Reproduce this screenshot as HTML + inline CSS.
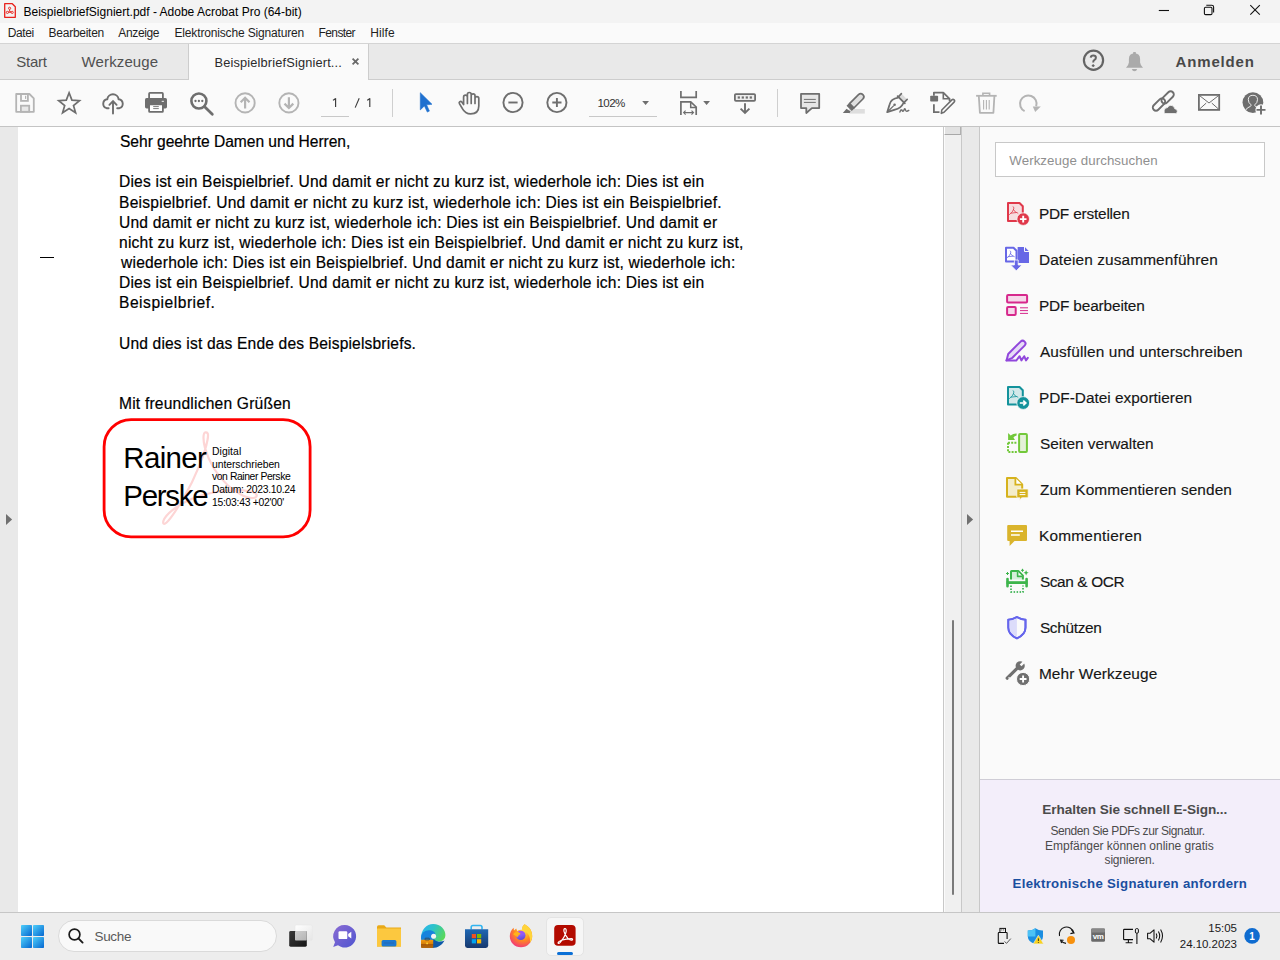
<!DOCTYPE html>
<html><head><meta charset="utf-8"><title>Acrobat</title>
<style>
*{box-sizing:border-box;margin:0;padding:0}
html,body{width:1280px;height:960px;overflow:hidden;background:#fff;font-family:"Liberation Sans",sans-serif;color:#000}
.a{position:absolute}
.t{position:absolute;white-space:pre}
svg{position:absolute;overflow:visible}
</style></head><body>

<div class="a" style="left:0;top:0;width:1280px;height:23px;background:#f3f3f3"></div>
<div class="a" style="left:0;top:23px;width:1280px;height:20px;background:#fafafa"></div>
<div class="a" style="left:0;top:43px;width:1280px;height:1px;background:#d4d4d4"></div>
<div class="a" style="left:0;top:44px;width:1280px;height:35px;background:#e9e9e9"></div>
<div class="a" style="left:0;top:79px;width:1280px;height:1px;background:#cdcdcd"></div>
<div class="a" style="left:188px;top:44px;width:1px;height:36px;background:#cdcdcd"></div>
<div class="a" style="left:189px;top:44px;width:179px;height:36px;background:#fafafa"></div>
<div class="a" style="left:368px;top:44px;width:1px;height:36px;background:#cdcdcd"></div>
<div class="a" style="left:0;top:80px;width:1280px;height:46px;background:#fafafa"></div>
<div class="a" style="left:0;top:126px;width:1280px;height:1px;background:#c4c4c4"></div>
<div class="a" style="left:0;top:127px;width:18px;height:785px;background:#e9e9e9"></div>
<div class="a" style="left:18px;top:127px;width:925px;height:785px;background:#ffffff"></div>
<div class="a" style="left:943px;top:127px;width:1px;height:785px;background:#c8c8c8"></div>
<div class="a" style="left:944px;top:127px;width:1px;height:785px;background:#fbfbfb"></div>
<div class="a" style="left:945px;top:127px;width:16px;height:785px;background:#f0f0f0"></div>
<div class="a" style="left:961px;top:127px;width:1px;height:785px;background:#c8c8c8"></div>
<div class="a" style="left:962px;top:127px;width:17px;height:785px;background:#e9e9e9"></div>
<div class="a" style="left:979px;top:127px;width:1px;height:785px;background:#c8c8c8"></div>
<div class="a" style="left:980px;top:127px;width:300px;height:652px;background:#fafafa"></div>
<div class="a" style="left:980px;top:779px;width:300px;height:1px;background:#cfcdd6"></div>
<div class="a" style="left:980px;top:780px;width:300px;height:132px;background:#f3eefa"></div>
<div class="a" style="left:0;top:912px;width:1280px;height:1px;background:#c6c6c6"></div>
<div class="a" style="left:0;top:913px;width:1280px;height:47px;background:#ededed"></div>
<!-- scrollbar thumb top & line -->
<div class="a" style="left:944px;top:127px;width:17px;height:8px;background:#e2e2e2;border-bottom:1px solid #a8a8a8;border-right:1px solid #b0b0b0;border-left:1px solid #fff"></div>
<div class="a" style="left:952px;top:620px;width:2px;height:275px;background:#7a7a7a;border-radius:1px"></div>
<!-- left dash -->
<div class="a" style="left:40px;top:257px;width:14px;height:1px;background:#000"></div>
<!-- search box -->
<div class="a" style="left:995px;top:142px;width:270px;height:35px;background:#fff;border:1px solid #c8c8c8"></div>
<!-- toolbar underlines & separators -->
<div class="a" style="left:321px;top:116px;width:28px;height:1px;background:#c8c8c8"></div>
<div class="a" style="left:589px;top:116px;width:68px;height:1px;background:#c8c8c8"></div>
<div class="a" style="left:392px;top:89px;width:1px;height:28px;background:#cfcfcf"></div>
<div class="a" style="left:777px;top:89px;width:1px;height:28px;background:#cfcfcf"></div>
<!-- taskbar search pill -->
<div class="a" style="left:58px;top:920px;width:219px;height:32px;background:#f9f9f9;border:1px solid #dadada;border-radius:16px"></div>
<!-- acrobat active -->
<div class="a" style="left:546px;top:917px;width:38px;height:39px;background:#f6f6f6;border:1px solid #e4e4e4;border-radius:5px"></div>
<div class="a" style="left:557px;top:952px;width:16px;height:3px;background:#0a6fd6;border-radius:2px"></div>


<svg style="left:0;top:0" width="1280" height="960" viewBox="0 0 1280 960">
 <!-- title bar pdf icon -->
 <path d="M4.7,3.7 H12.3 L15.3,6.7 V17.3 H4.7 Z" fill="none" stroke="#e8211c" stroke-width="1.3" stroke-linejoin="round"/>
 <g fill="none" stroke="#e8211c" stroke-width="0.9">
  <circle cx="9.6" cy="8.3" r="1.1"/><circle cx="7.4" cy="12.4" r="1.1"/><circle cx="12.2" cy="12.4" r="1.1"/>
  <path d="M9.6,9.4 V11.2 M8.5,12.3 H11.1 M9.6,11.2 L8.3,12 M9.6,11.2 L11.2,12"/>
 </g>
 <!-- window controls -->
 <path d="M1158.8,10.5 H1169" stroke="#111" stroke-width="1.1"/>
 <rect x="1204.4" y="7.2" width="7.6" height="7.4" rx="1.2" fill="none" stroke="#111" stroke-width="1.1"/>
 <path d="M1206.3,5.3 H1211.8 Q1213.6,5.3 1213.6,7.1 V12.6" fill="none" stroke="#111" stroke-width="1.1"/>
 <path d="M1250.3,5.2 L1259.8,14.7 M1259.8,5.2 L1250.3,14.7" stroke="#111" stroke-width="1.1"/>

 <!-- tab close x -->
 <path d="M352.6,58.6 L358.4,64.4 M358.4,58.6 L352.6,64.4" stroke="#6a6a6a" stroke-width="1.8"/>
 <!-- help -->
 <circle cx="1093.5" cy="60.3" r="9.6" fill="none" stroke="#646464" stroke-width="2.2"/>
 <path d="M1090.7,57.6 Q1090.9,55.6 1093.3,55.6 Q1095.9,55.6 1095.9,57.7 Q1095.9,59.1 1094.5,59.9 Q1093.2,60.6 1093.2,62.4" fill="none" stroke="#646464" stroke-width="2"/>
 <path d="M1093.2,64.2 V67 M1091.8,65.6 H1094.6" stroke="#646464" stroke-width="1.3"/>
 <!-- bell -->
 <rect x="1133.1" y="51.9" width="2.8" height="2.6" rx="0.6" fill="#aaaaaa"/>
 <path d="M1134.5,53.6 Q1140.1,53.6 1140.1,59 V62.6 Q1140.2,64.8 1143,67.7 H1126 Q1128.8,64.8 1128.9,62.6 V59 Q1128.9,53.6 1134.5,53.6 Z" fill="#aaaaaa"/>
 <path d="M1131.8,69 H1137.2 Q1136.6,71.2 1134.5,71.2 Q1132.4,71.2 1131.8,69 Z" fill="#aaaaaa"/>
 <!-- page numbers -->
 <path d="M335.6,98.2 V106.9 M335.6,98.3 Q334.6,99.8 332.9,100.3" fill="none" stroke="#3a3a3a" stroke-width="1.15"/>
 <path d="M359.2,98.2 L355.2,107.6" fill="none" stroke="#3a3a3a" stroke-width="1.1"/>
 <path d="M369.8,98.2 V106.9 M369.8,98.3 Q368.8,99.8 367.1,100.3" fill="none" stroke="#3a3a3a" stroke-width="1.15"/>
 <!-- save -->
 <path d="M16.2,94 H29.4 L33.8,98.4 V111.8 H16.2 Z" fill="none" stroke="#b4b4b4" stroke-width="1.8" stroke-linejoin="round"/>
 <rect x="21" y="94" width="6.9" height="6.9" fill="none" stroke="#b4b4b4" stroke-width="1.8"/>
 <rect x="25" y="95.8" width="1.2" height="3.1" fill="#b4b4b4"/>
 <rect x="20.9" y="105.7" width="8.3" height="6.1" fill="#e8e8e8" stroke="#b4b4b4" stroke-width="1.8"/>
 <!-- star -->
 <path d="M69.1,92.8 L71.9,100.1 L79.5,100.6 L73.5,105.6 L75.6,112.8 L69.1,108.6 L62.6,112.8 L64.7,105.6 L58.7,100.6 L66.3,100.1 Z" fill="none" stroke="#6e6e6e" stroke-width="1.7" stroke-linejoin="miter"/>
 <!-- upload cloud -->
 <path d="M108.6,108.2 H106.6 A4.6,4.6 0 0 1 107.3,99.2 A5.7,5.7 0 0 1 118.6,99.2 A4.6,4.6 0 0 1 119.4,108.2 H117.2" fill="none" stroke="#6e6e6e" stroke-width="1.9" stroke-linecap="round"/>
 <path d="M113,113.6 V101.2 M109.4,104.8 L113,101.2 L116.6,104.8" fill="none" stroke="#6e6e6e" stroke-width="1.9" stroke-linecap="round"/>
 <!-- printer -->
 <rect x="149.1" y="92.9" width="13.8" height="6.5" rx="0.8" fill="none" stroke="#6e6e6e" stroke-width="1.8"/>
 <rect x="145" y="98" width="22" height="10.4" rx="1.6" fill="#6e6e6e"/>
 <rect x="149.1" y="104.4" width="13.8" height="7.4" rx="0.6" fill="#fff" stroke="#6e6e6e" stroke-width="1.8"/>
 <path d="M153.2,106.6 H158.8 M153.2,108.6 H158.8" stroke="#6e6e6e" stroke-width="0.9"/>
 <rect x="161.7" y="100.8" width="2.2" height="1.2" fill="#ddd"/>
 <!-- zoom search -->
 <circle cx="198.9" cy="101" r="7.5" fill="none" stroke="#6e6e6e" stroke-width="2.6"/>
 <path d="M204.4,106.6 L212.3,114.3" stroke="#6e6e6e" stroke-width="2.8" stroke-linecap="round"/>
 <circle cx="195.5" cy="101" r="1.15" fill="#6e6e6e"/><circle cx="198.9" cy="101" r="1.15" fill="#6e6e6e"/><circle cx="202.3" cy="101" r="1.15" fill="#6e6e6e"/>
 <!-- up / down -->
 <circle cx="245.1" cy="102.9" r="9.6" fill="none" stroke="#b4b4b4" stroke-width="1.9"/>
 <path d="M245.1,108.6 V97.8 M240.7,102.2 L245.1,97.8 L249.5,102.2" fill="none" stroke="#b4b4b4" stroke-width="2.2"/>
 <circle cx="288.9" cy="102.9" r="9.6" fill="none" stroke="#b4b4b4" stroke-width="1.9"/>
 <path d="M288.9,97.2 V108 M284.5,103.6 L288.9,108 L293.3,103.6" fill="none" stroke="#b4b4b4" stroke-width="2.2"/>
 <!-- pointer -->
 <path d="M420.3,92.7 L432,104.3 L426.6,104.8 L429.4,111.1 L427.3,112.1 L424.4,105.9 L420.3,109.9 Z" fill="#1f70cf" stroke="#1f70cf" stroke-width="0.6" stroke-linejoin="round"/>
 <!-- hand -->
 <path d="M463.6,104.5 V97 A1.9,1.9 0 0 1 467.4,97 V103.5 V94.4 A1.9,1.9 0 0 1 471.2,94.4 V103.5 V95.8 A1.9,1.9 0 0 1 475,95.8 V103.5 V98.6 A1.9,1.9 0 0 1 478.8,98.6 V106 C478.8,111.2 475.5,113.9 470.6,113.9 C466.5,113.9 464,111.5 462.2,108.3 L459.4,103.6 C458.6,102.2 460.6,100.6 461.8,102 Z" fill="none" stroke="#6e6e6e" stroke-width="1.7" stroke-linejoin="round"/>
 <!-- zoom out / in -->
 <circle cx="513" cy="102.5" r="9.6" fill="none" stroke="#6e6e6e" stroke-width="1.9"/>
 <path d="M508.4,102.5 H517.6" stroke="#6e6e6e" stroke-width="1.9"/>
 <circle cx="556.9" cy="102.5" r="9.6" fill="none" stroke="#6e6e6e" stroke-width="1.9"/>
 <path d="M552.3,102.5 H561.5 M556.9,97.9 V107.1" stroke="#6e6e6e" stroke-width="1.9"/>
 <!-- dropdown triangles -->
 <path d="M642.2,101 H649 L645.6,104.9 Z" fill="#6e6e6e"/>
 <path d="M703.2,101 H710 L706.6,104.9 Z" fill="#6e6e6e"/>
 <!-- page fit -->
 <path d="M680.9,91.1 V97.3 H696.2 V91.1" fill="none" stroke="#6e6e6e" stroke-width="1.7"/>
 <path d="M680.9,114.9 V101.9 H690.7 L696.2,107 V114.9" fill="none" stroke="#6e6e6e" stroke-width="1.7"/>
 <path d="M690.7,101.9 V107.4 H696.2" fill="none" stroke="#6e6e6e" stroke-width="1.5"/>
 <path d="M683.6,112.6 H693.5 M685.6,110.6 L683.6,112.6 L685.6,114.6 M691.5,110.6 L693.5,112.6 L691.5,114.6" fill="none" stroke="#6e6e6e" stroke-width="1.1"/>
 <!-- ruler + down -->
 <rect x="734.9" y="94.1" width="20.2" height="6.7" rx="1" fill="#ececec" stroke="#6e6e6e" stroke-width="1.8"/>
 <rect x="737.7" y="96.4" width="2.2" height="2.2" fill="#6e6e6e"/><rect x="741.7" y="96.4" width="2.2" height="2.2" fill="#6e6e6e"/>
 <rect x="745.7" y="96.4" width="2.2" height="2.2" fill="#6e6e6e"/><rect x="749.7" y="96.4" width="2.2" height="2.2" fill="#6e6e6e"/>
 <path d="M745,103.2 V112.8 M740.6,108.6 L745,113 L749.4,108.6" fill="none" stroke="#6e6e6e" stroke-width="1.9"/>
 <!-- comment -->
 <path d="M801,93.9 H819.2 V108.1 H811.9 L806.3,113 V108.1 H801 Z" fill="#e6e6e6" stroke="#6e6e6e" stroke-width="1.8" stroke-linejoin="round"/>
 <path d="M803.9,99.4 H815.8 M803.9,102.4 H815.8" stroke="#6e6e6e" stroke-width="1"/>
 <!-- highlighter -->
 <rect x="848.9" y="109" width="15.9" height="4.6" fill="#dedede"/>
 <path d="M-6.5,-3.1 H6.2 A3.1,3.1 0 0 1 6.2,3.1 H-6.5 Z" transform="translate(856.3 101.2) rotate(-45)" fill="#e0e0e0" stroke="#6e6e6e" stroke-width="1.7" stroke-linejoin="round"/>
 <path d="M-6.5,-3.1 V3.1 H-9.5 V-3.1 Z" transform="translate(856.3 101.2) rotate(-45)" fill="#6e6e6e" stroke="#6e6e6e" stroke-width="1.2"/>
 <path d="M846.5,108.8 L842.8,112.9 L849.6,112.9 L850.6,111.6 Z" fill="#6e6e6e"/>
 <!-- pen sign -->
 <path d="M898.6,96.6 L901.4,93.6 L907.2,99.4 L904.2,102.4 Z" fill="#dcdcdc"/>
 <path d="M898.6,96.6 L901.4,93.6 M904.2,102.4 L907.2,99.4" stroke="#6e6e6e" stroke-width="1.6" stroke-linecap="round"/>
 <path d="M897.6,96.1 L904.8,103.3" stroke="#6e6e6e" stroke-width="1.8" stroke-linecap="round"/>
 <path d="M898.4,97.6 Q890.8,98.6 889.6,104.4 L887.2,112.2 L895,109.6 Q900.8,108.4 903.6,102.8" fill="none" stroke="#6e6e6e" stroke-width="1.8" stroke-linejoin="round"/>
 <path d="M887.6,111.8 L893.8,105.6" stroke="#6e6e6e" stroke-width="1.3"/>
 <circle cx="894.6" cy="104.8" r="1.3" fill="#6e6e6e"/>
 <path d="M899.9,112 Q901.2,108.6 902.2,110.6 Q903,112.4 904.2,109.4 Q905.1,107.8 905.6,110.4 Q906.2,112.2 908.8,110.4" fill="none" stroke="#6e6e6e" stroke-width="1.4" stroke-linecap="round"/>
 <!-- edit doc -->
 <path d="M933.9,95.8 V92.6 H943.3 L949.6,98.8 V101.2" fill="none" stroke="#6e6e6e" stroke-width="1.8" stroke-linejoin="round"/>
 <path d="M943.3,92.6 V98.8 H949.6" fill="none" stroke="#6e6e6e" stroke-width="1.6"/>
 <path d="M933.9,104.3 V112.2 H939.5" fill="none" stroke="#6e6e6e" stroke-width="1.8"/>
 <rect x="930.2" y="95.8" width="7.9" height="5.7" rx="0.8" fill="#6e6e6e"/>
 <path d="M941.3,113.3 L941.8,110 L951.9,99.9 Q953,98.8 954.1,99.9 Q955.2,101 954.1,102.1 L944,112.2 Z" fill="#fff" stroke="#6e6e6e" stroke-width="1.6" stroke-linejoin="round"/>
 <!-- trash -->
 <path d="M976.1,95.8 H996.7" stroke="#b4b4b4" stroke-width="1.8"/>
 <path d="M982.9,95.4 V93.3 H989.6 V95.4" fill="none" stroke="#b4b4b4" stroke-width="1.6"/>
 <path d="M978.8,96 L979.9,112.8 H993.4 L994.4,96" fill="none" stroke="#b4b4b4" stroke-width="1.8" stroke-linejoin="round"/>
 <path d="M983.6,100 V109.4 M986.4,100 V109.4 M989.2,100 V109.4" stroke="#b4b4b4" stroke-width="1.1"/>
 <!-- redo -->
 <path d="M1024.6,111.2 A8.3,8.3 0 1 1 1036.2,106.3" fill="none" stroke="#b4b4b4" stroke-width="2"/>
 <path d="M1032.8,106.4 L1040.8,106.6 L1035.2,111.9 Z" fill="#b4b4b4"/>
 <!-- link cloud -->
 <g fill="none" stroke="#6e6e6e" stroke-width="1.9">
  <rect x="-7.4" y="-3.2" width="14.8" height="6.4" rx="3.2" transform="translate(1159.6 105.2) rotate(-45) translate(0 -0.9)"/>
  <rect x="-7.4" y="-3.2" width="14.8" height="6.4" rx="3.2" transform="translate(1167.0 96.8) rotate(-45) translate(0 0.9)"/>
 </g>
 <path d="M1164.6,113.6 H1175.6 Q1177.3,113.6 1177.3,111.4 Q1177.3,108.8 1174.8,108.8 Q1174.2,105.3 1170.9,105.3 Q1168.3,105.3 1167.6,107.5 Q1164.3,107.6 1164.1,110.8 Q1164.1,113.6 1164.6,113.6 Z" fill="#6e6e6e" stroke="#fafafa" stroke-width="0.8"/>
 <!-- mail -->
 <rect x="1198.9" y="94.9" width="20.3" height="15" fill="none" stroke="#6e6e6e" stroke-width="1.8"/>
 <path d="M1199.3,95.4 L1209,103 L1218.8,95.4 M1199.3,109.3 L1206.2,103.1 M1218.8,109.3 L1211.8,103.1" fill="none" stroke="#6e6e6e" stroke-width="1"/>
 <!-- user add -->
 <circle cx="1252.9" cy="102.6" r="10.4" fill="#6e6e6e"/>
 <path d="M1245.6,110.2 Q1246.8,107.6 1250.4,106.4 Q1251.2,106 1251,104.8 Q1248.3,102.8 1248.3,99.6 Q1248.4,95.3 1252.9,95.3 Q1257.4,95.3 1257.5,99.6 Q1257.5,102.8 1254.8,104.8 Q1254.6,106 1255.4,106.4 Q1257.2,107 1258.4,107.8" fill="none" stroke="#fafafa" stroke-width="0.9"/>
 <circle cx="1261" cy="109.9" r="5.6" fill="#fafafa"/>
 <path d="M1261,105.4 V114.4 M1256.5,109.9 H1265.5" stroke="#6e6e6e" stroke-width="1.9"/>
 <!-- left/right arrows -->
 <path d="M6,514 L12.1,519.5 L6,525 Z" fill="#707070"/>
 <path d="M967,514 L973.1,519.5 L967,525 Z" fill="#707070"/>
</svg>

<svg style="left:0;top:0" width="1280" height="960" viewBox="0 0 1280 960">
 <!-- PDF erstellen -->
 <path d="M1008,203 H1019.5 L1022.8,206.3 V221 H1008 Z" fill="#f6dde0" stroke="#e0384a" stroke-width="2" stroke-linejoin="round"/>
 <path d="M1013.125,206.6 Q1014.1875,206.6 1013.7624999999999,208.9375 Q1013.01875,211.9125 1009.5124999999999,214.56875 M1013.4437499999999,209.575 Q1014.6125,212.44375 1017.8,213.1875 M1010.89375,213.1875 L1016.20625,212.54999999999998" fill="none" stroke="#e0384a" stroke-width="0.8" stroke-linecap="round"/>
 <circle cx="1023.2" cy="219.1" r="6.3" fill="#e0384a" stroke="#fafafa" stroke-width="0.8"/>
 <path d="M1023.2,215.8 V222.4 M1019.9,219.1 H1026.5" stroke="#fff" stroke-width="1.9"/>
 <!-- Dateien zusammenfuehren -->
 <path d="M1006,247.8 H1013.5 L1016.5,250.8 V261.5 H1006 Z" fill="#fff" stroke="#6767e6" stroke-width="2" stroke-linejoin="round"/>
 <path d="M1010.175,250.9 Q1011.1125,250.9 1010.7375,252.9625 Q1010.08125,255.5875 1006.9875,257.93125 M1010.45625,253.525 Q1011.4875,256.05625 1014.3,256.7125 M1008.20625,256.7125 L1012.89375,256.15" fill="none" stroke="#6767e6" stroke-width="0.8" stroke-linecap="round"/>
 <path d="M1017.6,247 H1024.8 L1029,251.2 V263 H1017.6 Z" fill="#6767e6"/>
 <path d="M1024.5,247 V251.5 H1029" fill="none" stroke="#fafafa" stroke-width="1"/>
 <path d="M1014.4,260 H1018.2 V265 H1022 L1016.3,270.8 L1010.6,265 H1014.4 Z" fill="#6767e6" stroke="#fafafa" stroke-width="0.8"/>
 <!-- PDF bearbeiten -->
 <rect x="1007.1" y="295" width="20" height="7.6" rx="1" fill="#f6d8ea" stroke="#d6288c" stroke-width="2"/>
 <rect x="1007.1" y="307" width="8.6" height="8" rx="1" fill="#f6d8ea" stroke="#d6288c" stroke-width="2"/>
 <path d="M1020,307.8 H1028 M1020,310.6 H1028 M1020,313.4 H1028" stroke="#d6288c" stroke-width="1"/>
 <!-- Ausfuellen -->
 <path d="M1006.6,360.3 L1008.2,354 L1020.6,341.6 Q1022.6,339.6 1024.6,341.6 Q1026.6,343.6 1024.6,345.6 L1012.4,357.8 Z" fill="#e6dcf6" stroke="#9147dc" stroke-width="2" stroke-linejoin="round"/>
 <path d="M1006.4,360.6 H1016.2 L1019.6,356.2 L1021.4,360.4 L1024.2,356.2 L1026,360.4 L1027.8,357.9" fill="none" stroke="#9147dc" stroke-width="2" stroke-linejoin="round" stroke-linecap="round"/>
 <!-- PDF-Datei exportieren -->
 <path d="M1008,387 H1019.5 L1022.8,390.3 V404.6 H1008 Z" fill="#d3e8ea" stroke="#12929b" stroke-width="2" stroke-linejoin="round"/>
 <path d="M1013.125,390.59999999999997 Q1014.1875,390.59999999999997 1013.7624999999999,392.93749999999994 Q1013.01875,395.91249999999997 1009.5124999999999,398.56874999999997 M1013.4437499999999,393.575 Q1014.6125,396.44374999999997 1017.8,397.18749999999994 M1010.89375,397.18749999999994 L1016.20625,396.54999999999995" fill="none" stroke="#12929b" stroke-width="0.8" stroke-linecap="round"/>
 <circle cx="1023.2" cy="403" r="6.4" fill="#12929b" stroke="#fafafa" stroke-width="0.8"/>
 <path d="M1019.8,403 H1025.5 M1023.3,400.6 L1025.8,403 L1023.3,405.4" fill="none" stroke="#fff" stroke-width="1.7"/>
 <!-- Seiten verwalten -->
 <rect x="1019.1" y="434" width="7.8" height="18" rx="1" fill="#e4f1d8" stroke="#72c83a" stroke-width="2"/>
 <path d="M1008,442.8 V452 H1016.8 M1008,442.8 H1016.8" fill="none" stroke="#72c83a" stroke-width="2" stroke-dasharray="2 1.2"/>
 <path d="M1008.1,433 L1010.6,435.6 Q1013.4,433.4 1016.6,433.6 L1016.6,435.4 Q1014.6,436 1013.4,437.4 L1015,439.9 H1008.1 Z" fill="#72c83a"/>
 <!-- Zum Kommentieren senden -->
 <path d="M1007,478 H1015.8 L1022.2,484.4 V496.8 H1007 Z" fill="#f4edca" stroke="#d6b21c" stroke-width="2" stroke-linejoin="round"/>
 <path d="M1015.4,478 V484.6 H1022" fill="#fff" stroke="#d6b21c" stroke-width="1.8"/>
 <path d="M1017.6,489 H1027.4 Q1028.2,489 1028.2,489.8 V497 Q1028.2,497.8 1027.4,497.8 H1021.6 L1019.8,500.6 V497.8 H1017.6 Q1016.8,497.8 1016.8,497 V489.8 Q1016.8,489 1017.6,489 Z" fill="#d6b21c" stroke="#fafafa" stroke-width="0.8"/>
 <path d="M1019.6,492.4 H1025.4 M1019.6,494.6 H1025.4" stroke="#fff" stroke-width="1"/>
 <!-- Kommentieren -->
 <path d="M1008.2,525 H1026 Q1027,525 1027,526 V540 Q1027,541 1026,541 H1014.5 L1009.6,546 V541 H1008.2 Q1007.2,541 1007.2,540 V526 Q1007.2,525 1008.2,525 Z" fill="#dab42c"/>
 <path d="M1011,531.3 H1023 M1011,535 H1019.8" stroke="#fff" stroke-width="1.6"/>
 <!-- Scan & OCR -->
 <path d="M1011,579.6 V571.6 Q1011,571 1011.6,571 H1018.3 L1022.9,575.6 V579.6" fill="#d6efd9" stroke="#3db54b" stroke-width="2" stroke-linejoin="round"/>
 <path d="M1017.6,571.4 V576.4 H1022.6" fill="#fafafa" stroke="#3db54b" stroke-width="1.6" stroke-linejoin="round"/>
 <path d="M1007.5,579 V586.3 M1026.6,579 V586.3" stroke="#3db54b" stroke-width="2.6" stroke-linecap="round"/>
 <path d="M1006.6,582.6 H1027.4" stroke="#3db54b" stroke-width="2.8"/>
 <path d="M1011,585.6 V592 H1023 V585.6" fill="none" stroke="#1fa83a" stroke-width="1.5" stroke-dasharray="1.5 1.5"/>
 <path d="M1007.5,572 V575 M1006,573.5 H1009" stroke="#3db54b" stroke-width="1"/>
 <path d="M1022.5,568.8 V571.8 M1021,570.3 H1024" stroke="#3db54b" stroke-width="1"/>
 <path d="M1026.1,570.2 L1026.9,572 L1028.7,572.8 L1026.9,573.6 L1026.1,575.4 L1025.3,573.6 L1023.5,572.8 L1025.3,572 Z" fill="#3db54b"/>
 <!-- Schuetzen -->
 <path d="M1016.9,617 Q1021.5,619.8 1025.5,619.6 V627.5 Q1025.5,634.6 1016.9,638.3 Q1008.3,634.6 1008.3,627.5 V619.6 Q1012.3,619.8 1016.9,617 Z" fill="#fafafa" stroke="#6565ec" stroke-width="1.9" stroke-linejoin="round"/>
 <path d="M1016.9,618.3 Q1012.6,620.7 1009.3,620.6 V627.5 Q1009.3,633.7 1016.9,637.1 Z" fill="#dcdcfa"/>
 <path d="M1016.9,617 Q1021.5,619.8 1025.5,619.6 V627.5 Q1025.5,634.6 1016.9,638.3 Q1008.3,634.6 1008.3,627.5 V619.6 Q1012.3,619.8 1016.9,617 Z" fill="none" stroke="#6565ec" stroke-width="1.9" stroke-linejoin="round"/>
 <!-- Mehr Werkzeuge -->
 <path d="M1007.2,678.2 L1016.6,668.8" stroke="#707070" stroke-width="3.2" stroke-linecap="round"/>
 <circle cx="1020.2" cy="665.8" r="4.6" fill="#707070"/>
 <path d="M1020.6,665.4 L1025.6,660.4" stroke="#fafafa" stroke-width="2.6"/>
 <circle cx="1009.1" cy="677.9" r="0.8" fill="#fafafa"/>
 <circle cx="1023.1" cy="679" r="6.6" fill="#707070" stroke="#fafafa" stroke-width="1"/>
 <path d="M1023.1,675.6 V682.4 M1019.7,679 H1026.5" stroke="#fff" stroke-width="1.9"/>
</svg>

<svg style="left:0;top:0" width="1280" height="960" viewBox="0 0 1280 960">
 <defs>
  <linearGradient id="win" x1="0" y1="0" x2="1" y2="1"><stop offset="0" stop-color="#4fd0fb"/><stop offset="1" stop-color="#0566d0"/></linearGradient>
  <linearGradient id="teams" x1="0" y1="0" x2="1" y2="1"><stop offset="0" stop-color="#8a6bd3"/><stop offset="1" stop-color="#4f55d0"/></linearGradient>
  <linearGradient id="edge1" x1="0" y1="0.2" x2="1" y2="0.6"><stop offset="0" stop-color="#2bb4f0"/><stop offset="0.45" stop-color="#2dc3c8"/><stop offset="1" stop-color="#58d85a"/></linearGradient>
  <linearGradient id="brief" x1="0" y1="0" x2="0" y2="1"><stop offset="0" stop-color="#f59a10"/><stop offset="0.45" stop-color="#d8830c"/><stop offset="0.55" stop-color="#a85a08"/><stop offset="1" stop-color="#b46a10"/></linearGradient>
  <linearGradient id="store" x1="0" y1="0" x2="0" y2="1"><stop offset="0" stop-color="#1f68b4"/><stop offset="1" stop-color="#17396f"/></linearGradient>
  <linearGradient id="tvl" x1="0" y1="0" x2="1" y2="1"><stop offset="0" stop-color="#ffffff"/><stop offset="1" stop-color="#e6e6e6"/></linearGradient>
  <linearGradient id="tvd" x1="0" y1="0" x2="1" y2="1"><stop offset="0" stop-color="#3a3a3a"/><stop offset="1" stop-color="#151515"/></linearGradient>
  <linearGradient id="tvm" x1="0" y1="0" x2="1" y2="1"><stop offset="0" stop-color="#cfcfcf"/><stop offset="1" stop-color="#b4b4b4"/></linearGradient>
  <linearGradient id="ffp" x1="0.3" y1="0" x2="0.6" y2="1"><stop offset="0" stop-color="#b44cf0"/><stop offset="0.5" stop-color="#8a5cf5"/><stop offset="1" stop-color="#5a48d0"/></linearGradient>
  <radialGradient id="ff" cx="0.6" cy="0.3" r="0.8"><stop offset="0" stop-color="#ffe14a"/><stop offset="0.5" stop-color="#ff8a1e"/><stop offset="1" stop-color="#f0288a"/></radialGradient>
 </defs>
 <!-- windows logo -->
 <rect x="21" y="925" width="11" height="11" rx="0.8" fill="url(#win)"/>
 <rect x="33" y="925" width="11" height="11" rx="0.8" fill="url(#win)"/>
 <rect x="21" y="937" width="11" height="11" rx="0.8" fill="url(#win)"/>
 <rect x="33" y="937" width="11" height="11" rx="0.8" fill="url(#win)"/>
 <!-- search magnifier -->
 <circle cx="74.5" cy="934.5" r="5.4" fill="none" stroke="#1b1b1b" stroke-width="1.7"/>
 <path d="M78.4,938.4 L82.6,942.6" stroke="#1b1b1b" stroke-width="1.9" stroke-linecap="round"/>
 <!-- task view -->
 <rect x="295" y="925" width="17.3" height="15.3" rx="1.2" fill="url(#tvl)" stroke="#e4e4e4" stroke-width="0.5"/>
 <rect x="289.2" y="931" width="17.6" height="15.7" rx="1.4" fill="url(#tvd)"/>
 <rect x="295" y="931" width="11.8" height="9.6" rx="0.8" fill="url(#tvm)"/>
 <!-- teams -->
 <path d="M344.6,925 A11.3,11.3 0 1 1 338,945.3 L333.2,947 L335,942.3 A11.3,11.3 0 0 1 344.6,925 Z" fill="url(#teams)"/>
 <rect x="338.5" y="931.2" width="8.8" height="7.9" rx="1.2" fill="#fff"/>
 <path d="M348.2,934 L351.3,931.8 V938.4 L348.2,936.3 Z" fill="#fff"/>
 <!-- folder -->
 <path d="M377,927 Q377,925.3 378.6,925.3 H384.2 L386.4,927.4 H401 V946.5 H377 Z" fill="#e9a917"/>
 <rect x="377" y="928.6" width="24" height="17.9" rx="0.6" fill="#fcc83f"/>
 <rect x="381.6" y="940" width="14.8" height="6.5" rx="1.5" fill="#1b78d0"/>
 <path d="M384,943 H394" stroke="#2a63a8" stroke-width="0.8"/>
 <!-- edge -->
 <path d="M433.2,923.9 C440.8,923.9 445.4,929.6 445.4,935 C445.4,938.8 442.6,941.6 438.6,941.6 C434.6,941.6 432.2,939.4 433.4,938.2 C433.2,938.2 421,942 421,938 C421,930 426.4,923.9 433.2,923.9 Z" fill="url(#edge1)"/>
 <path d="M421,938 C421,933 424.6,930.2 429,930.2 C432.6,930.2 435.2,932 435.4,934.2 C434,934.4 432.6,935.4 432.4,936.8 C432.2,939.6 434.8,941.4 438.2,941.6 C434,945 428,946 424,944 C422,942.6 421,940.4 421,938 Z" fill="#1683dd"/>
 <circle cx="433.6" cy="936.2" r="2.5" fill="#f4f4f4"/>
 <path d="M433.6,938.7 C435,941 437.8,941.8 440.2,941.6 C442,941.4 443.4,941 444.5,940.5 C442.4,944.6 438,948 432.5,948 C430,948 428,947.2 426,946 C429.8,945.4 432.6,942.6 433.6,938.7 Z" fill="#0d58a8"/>
 <rect x="421" y="939.8" width="12.2" height="8.3" rx="0.8" fill="url(#brief)"/>
 <rect x="425" y="938.2" width="4.4" height="1.8" rx="0.6" fill="none" stroke="#3a3a3a" stroke-width="0.7"/>
 <rect x="426.3" y="942.6" width="1.6" height="1.6" fill="#ffd83a"/>
 <!-- store -->
 <path d="M471.2,929.5 V927.2 Q471.2,925.5 472.9,925.5 H480.3 Q482,925.5 482,927.2 V929.5" fill="none" stroke="#31b4f0" stroke-width="1.6"/>
 <path d="M465,929.2 H488.2 V945.6 Q488.2,948 485.8,948 H467.4 Q465,948 465,945.6 Z" fill="url(#store)"/>
 <rect x="471.8" y="934" width="4.2" height="4.2" fill="#f25022"/><rect x="477" y="934" width="4.2" height="4.2" fill="#7fba00"/>
 <rect x="471.8" y="939.2" width="4.2" height="4.2" fill="#00a4ef"/><rect x="477" y="939.2" width="4.2" height="4.2" fill="#ffb900"/>
 <!-- firefox -->
 <path d="M521,947.2 C514.6,947.2 509.8,942.4 509.8,936.2 C509.8,932.6 511.2,930 513.6,927.8 L514,930.4 L516.2,928.6 L517.2,931 C518.6,930 520.4,929.6 522.2,929.8 C521.6,927.8 522.6,925.6 524.6,924.2 C530.2,927 532.2,931.6 532.2,936.2 C532.2,942.4 527.4,947.2 521,947.2 Z" fill="url(#ff)"/>
 <path d="M524.6,924.2 C530.2,927 532.2,931.6 532.2,936.2 C532.2,938.5 531.4,940.8 530,942.5 C530.6,936 527.5,931.8 522.6,930.2 C521.8,928 522.6,925.6 524.6,924.2 Z" fill="#ffd43a"/>
 <circle cx="520.8" cy="935.4" r="4.7" fill="url(#ffp)"/>
 <path d="M513.2,934.6 C514.2,932.4 516.4,931.8 518.4,932.2 C519.6,932.4 520.4,933.2 520.6,934 C519.2,934.6 518.2,935.6 517.6,937.2 C516.4,936.2 514.8,935.4 513.2,934.6 Z" fill="#ffb31a"/>
 <!-- acrobat -->
 <rect x="554.2" y="925" width="21.4" height="20.7" rx="3.8" fill="#b30b00"/>
 <path d="M564.9,928.6 Q566.6,928.6 566.1,931.8 Q565.1,936.5 560,942.6 Q558.4,944.2 558,942.8 Q558.2,941.5 561.5,940.2 Q566,938.7 571.4,938.6 Q573.2,938.7 572.3,939.9 Q571,940.8 567.7,938.2 Q564.6,934.6 564,931.4 Q563.6,928.6 564.9,928.6 Z" fill="none" stroke="#fff" stroke-width="1.2" stroke-linejoin="round"/>

 <!-- tray: usb -->
 <rect x="999.9" y="928.4" width="5.6" height="4.1" fill="none" stroke="#111" stroke-width="1"/>
 <path d="M1001.4,929.9 H1002.2 M1003.3,929.9 H1004.1" stroke="#111" stroke-width="0.9"/>
 <path d="M1004,943.4 H999 Q998.3,943.4 998.3,942.7 V933.2 Q998.3,932.5 999,932.5 H1006.4 Q1007.1,932.5 1007.1,933.2 V939" fill="none" stroke="#111" stroke-width="1.1"/>
 <path d="M1004.6,941.4 L1006.5,943.4 L1010.8,938.6" fill="none" stroke="#444" stroke-width="0.9"/>
 <!-- tray: defender shield with warning -->
 <path d="M1035.4,928.2 Q1038.8,930.6 1043,930.4 V936.4 Q1043,941.6 1035.4,944 Q1027.8,941.6 1027.8,936.4 V930.4 Q1032,930.6 1035.4,928.2 Z" fill="#1b8ee0"/>
 <path d="M1035.4,928.2 Q1032,930.6 1027.8,930.4 V936.4 H1035.4 Z" fill="#4cc2f5"/>
 <path d="M1038.4,935.2 L1043.6,943.9 H1033.2 Z" fill="#f9d21e" stroke="#ededed" stroke-width="0.6"/>
 <path d="M1038.4,938.4 V941 M1038.4,942 V942.8" stroke="#222" stroke-width="0.9"/>
 <!-- tray: sync -->
 <path d="M1059.5,936 A7.2,7.2 0 0 1 1073.5,932.5" fill="none" stroke="#111" stroke-width="1.1"/>
 <path d="M1071.2,929.5 L1074,932.8 L1070.4,933.6" fill="none" stroke="#111" stroke-width="1.1"/>
 <path d="M1066,943.4 Q1062.5,943 1061,940.5" fill="none" stroke="#111" stroke-width="1.1"/>
 <path d="M1063.6,940.2 L1060.6,940.1 L1061.6,943" fill="none" stroke="#111" stroke-width="1.1"/>
 <circle cx="1071" cy="939.9" r="4" fill="#f7910e"/>
 <!-- tray: vm -->
 <rect x="1091.2" y="928.4" width="13.8" height="13.4" rx="1.4" fill="#6a6a6a"/>
 <rect x="1091.2" y="928.4" width="13.8" height="4" rx="1" fill="#888"/>
 <text x="1098.1" y="938.6" font-family="Liberation Sans" font-weight="bold" font-size="8" fill="#fff" text-anchor="middle" letter-spacing="-0.5">vm</text>
 <!-- tray: network monitor -->
 <path d="M1133,929.4 H1124.3 Q1123.6,929.4 1123.6,930.1 V938.9 Q1123.6,939.6 1124.3,939.6 H1133" fill="none" stroke="#111" stroke-width="1.1"/>
 <path d="M1128.4,939.8 V942.4 M1125.6,942.8 H1132.4" stroke="#111" stroke-width="1.1"/>
 <rect x="1135.4" y="928.6" width="3" height="4.6" rx="1.2" fill="none" stroke="#111" stroke-width="1"/>
 <path d="M1136.9,933.2 V944" stroke="#111" stroke-width="1.1"/>
 <!-- tray: speaker -->
 <path d="M1147.6,933.2 H1150.2 L1154,929.8 V942.2 L1150.2,938.8 H1147.6 Z" fill="none" stroke="#111" stroke-width="1.05" stroke-linejoin="round"/>
 <path d="M1156.2,933.6 Q1157.6,936 1156.2,938.4 M1158.4,931.6 Q1161,936 1158.4,940.4 M1160.6,929.6 Q1164.4,936 1160.6,942.4" fill="none" stroke="#111" stroke-width="1.05"/>
 <!-- notification badge -->
 <circle cx="1252.1" cy="935.9" r="7.8" fill="#0f6cd0"/>
 <text x="1252.1" y="940" font-family="Liberation Sans" font-weight="bold" font-size="10" fill="#fff" text-anchor="middle">1</text>
</svg>


<svg style="left:0;top:0" width="1280" height="960" viewBox="0 0 1280 960">
 <rect x="104.1" y="419.7" width="206" height="117.2" rx="27" fill="none" stroke="#ff0000" stroke-width="2.8"/>
 <g fill="none" stroke="#fdd5d5" stroke-width="2.2" stroke-linecap="round" stroke-linejoin="round">
  <path d="M205.5,432.4 C208,432 208.6,434.2 207.5,440 C205.3,452 196.5,476 183,499 C177,509 171,518.5 166.6,522.5 C163.8,525 162.5,523.8 163.5,520.6 C165.5,514.8 176,505.5 191.5,499 C212,490.6 236,488.6 250.5,491.5 C257.5,493 258.2,496.5 254.5,497.8 C249.5,499.5 238,494.5 228,485.5 C217,475.5 209,462 205,448 C203,440.5 202.8,432.8 205.5,432.4 Z"/>
 </g>
</svg>

<div class="t" style="left:23.50px;top:5.80px;font-size:12px;line-height:12px;color:#000">BeispielbriefSigniert.pdf - Adobe Acrobat Pro (64-bit)</div>
<div class="t" style="left:7.70px;top:26.60px;font-size:12px;line-height:12px;letter-spacing:-0.387px;color:#1f1f1f">Datei</div>
<div class="t" style="left:48.60px;top:26.60px;font-size:12px;line-height:12px;letter-spacing:-0.263px;color:#1f1f1f">Bearbeiten</div>
<div class="t" style="left:118.30px;top:26.60px;font-size:12px;line-height:12px;letter-spacing:-0.365px;color:#1f1f1f">Anzeige</div>
<div class="t" style="left:174.50px;top:26.60px;font-size:12px;line-height:12px;letter-spacing:-0.158px;color:#1f1f1f">Elektronische Signaturen</div>
<div class="t" style="left:318.60px;top:26.60px;font-size:12px;line-height:12px;letter-spacing:-0.631px;color:#1f1f1f">Fenster</div>
<div class="t" style="left:370.20px;top:26.60px;font-size:12px;line-height:12px;letter-spacing:0.117px;color:#1f1f1f">Hilfe</div>
<div class="t" style="left:16.30px;top:53.70px;font-size:15px;line-height:15px;letter-spacing:-0.252px;color:#505050">Start</div>
<div class="t" style="left:81.60px;top:53.70px;font-size:15px;line-height:15px;letter-spacing:0.119px;color:#505050">Werkzeuge</div>
<div class="t" style="left:214.50px;top:56.50px;font-size:12.8px;line-height:12.8px;letter-spacing:0.156px;color:#2b2b2b">BeispielbriefSigniert...</div>
<div class="t" style="left:1175.50px;top:53.60px;font-size:15px;line-height:15px;font-weight:700;letter-spacing:0.850px;color:#484848">Anmelden</div>
<div class="t" style="left:597.50px;top:96.90px;font-size:11.6px;line-height:11.6px;letter-spacing:-0.615px;color:#333">102%</div>
<div class="t" style="left:120.00px;top:134.10px;font-size:15.6px;line-height:15.6px;letter-spacing:-0.038px;color:#000;-webkit-text-stroke:0.2px #000">Sehr geehrte Damen und Herren,</div>
<div class="t" style="left:119.00px;top:174.40px;font-size:15.6px;line-height:15.6px;letter-spacing:0.190px;color:#000;-webkit-text-stroke:0.2px #000">Dies ist ein Beispielbrief. Und damit er nicht zu kurz ist, wiederhole ich: Dies ist ein</div>
<div class="t" style="left:119.00px;top:194.55px;font-size:15.6px;line-height:15.6px;letter-spacing:0.236px;color:#000;-webkit-text-stroke:0.2px #000">Beispielbrief. Und damit er nicht zu kurz ist, wiederhole ich: Dies ist ein Beispielbrief.</div>
<div class="t" style="left:119.00px;top:214.70px;font-size:15.6px;line-height:15.6px;letter-spacing:0.191px;color:#000;-webkit-text-stroke:0.2px #000">Und damit er nicht zu kurz ist, wiederhole ich: Dies ist ein Beispielbrief. Und damit er</div>
<div class="t" style="left:119.00px;top:234.85px;font-size:15.6px;line-height:15.6px;letter-spacing:0.218px;color:#000;-webkit-text-stroke:0.2px #000">nicht zu kurz ist, wiederhole ich: Dies ist ein Beispielbrief. Und damit er nicht zu kurz ist,</div>
<div class="t" style="left:121.00px;top:255.00px;font-size:15.6px;line-height:15.6px;letter-spacing:0.200px;color:#000;-webkit-text-stroke:0.2px #000">wiederhole ich: Dies ist ein Beispielbrief. Und damit er nicht zu kurz ist, wiederhole ich:</div>
<div class="t" style="left:119.00px;top:275.15px;font-size:15.6px;line-height:15.6px;letter-spacing:0.190px;color:#000;-webkit-text-stroke:0.2px #000">Dies ist ein Beispielbrief. Und damit er nicht zu kurz ist, wiederhole ich: Dies ist ein</div>
<div class="t" style="left:119.00px;top:295.30px;font-size:15.6px;line-height:15.6px;letter-spacing:0.512px;color:#000;-webkit-text-stroke:0.2px #000">Beispielbrief.</div>
<div class="t" style="left:119.00px;top:335.60px;font-size:15.6px;line-height:15.6px;letter-spacing:0.160px;color:#000;-webkit-text-stroke:0.2px #000">Und dies ist das Ende des Beispielsbriefs.</div>
<div class="t" style="left:119.00px;top:396.05px;font-size:15.6px;line-height:15.6px;letter-spacing:0.200px;color:#000;-webkit-text-stroke:0.2px #000">Mit freundlichen Grüßen</div>
<div class="t" style="left:123.30px;top:442.80px;font-size:29.5px;line-height:29.5px;letter-spacing:-0.675px;color:#000">Rainer</div>
<div class="t" style="left:123.30px;top:480.50px;font-size:29.5px;line-height:29.5px;letter-spacing:-1.281px;color:#000">Perske</div>
<div class="t" style="left:212.00px;top:446.60px;font-size:10.4px;line-height:10.4px;letter-spacing:0.056px;color:#000">Digital</div>
<div class="t" style="left:212.00px;top:459.50px;font-size:10.4px;line-height:10.4px;letter-spacing:-0.066px;color:#000">unterschrieben</div>
<div class="t" style="left:212.00px;top:472.40px;font-size:10.4px;line-height:10.4px;letter-spacing:-0.425px;color:#000">von Rainer Perske</div>
<div class="t" style="left:212.00px;top:485.30px;font-size:10.4px;line-height:10.4px;letter-spacing:-0.300px;color:#000">Datum: 2023.10.24</div>
<div class="t" style="left:212.00px;top:498.20px;font-size:10.4px;line-height:10.4px;letter-spacing:-0.287px;color:#000">15:03:43 +02'00'</div>
<div class="t" style="left:1009.30px;top:153.70px;font-size:13.3px;line-height:13.3px;letter-spacing:0.073px;color:#8f8f8f">Werkzeuge durchsuchen</div>
<div class="t" style="left:1038.90px;top:206.20px;font-size:15.4px;line-height:15.4px;letter-spacing:-0.198px;color:#161616;-webkit-text-stroke:0.15px #161616">PDF erstellen</div>
<div class="t" style="left:1038.90px;top:252.20px;font-size:15.4px;line-height:15.4px;letter-spacing:0.125px;color:#161616;-webkit-text-stroke:0.15px #161616">Dateien zusammenführen</div>
<div class="t" style="left:1038.90px;top:298.20px;font-size:15.4px;line-height:15.4px;letter-spacing:-0.149px;color:#161616;-webkit-text-stroke:0.15px #161616">PDF bearbeiten</div>
<div class="t" style="left:1039.90px;top:344.20px;font-size:15.4px;line-height:15.4px;letter-spacing:0.126px;color:#161616;-webkit-text-stroke:0.15px #161616">Ausfüllen und unterschreiben</div>
<div class="t" style="left:1038.90px;top:390.20px;font-size:15.4px;line-height:15.4px;color:#161616;-webkit-text-stroke:0.15px #161616">PDF-Datei exportieren</div>
<div class="t" style="left:1039.90px;top:436.20px;font-size:15.4px;line-height:15.4px;color:#161616;-webkit-text-stroke:0.15px #161616">Seiten verwalten</div>
<div class="t" style="left:1039.90px;top:482.20px;font-size:15.4px;line-height:15.4px;letter-spacing:0.093px;color:#161616;-webkit-text-stroke:0.15px #161616">Zum Kommentieren senden</div>
<div class="t" style="left:1038.90px;top:528.20px;font-size:15.4px;line-height:15.4px;letter-spacing:0.252px;color:#161616;-webkit-text-stroke:0.15px #161616">Kommentieren</div>
<div class="t" style="left:1039.90px;top:574.20px;font-size:15.4px;line-height:15.4px;letter-spacing:-0.376px;color:#161616;-webkit-text-stroke:0.15px #161616">Scan &amp; OCR</div>
<div class="t" style="left:1039.90px;top:620.20px;font-size:15.4px;line-height:15.4px;letter-spacing:-0.316px;color:#161616;-webkit-text-stroke:0.15px #161616">Schützen</div>
<div class="t" style="left:1038.90px;top:666.20px;font-size:15.4px;line-height:15.4px;letter-spacing:0.112px;color:#161616;-webkit-text-stroke:0.15px #161616">Mehr Werkzeuge</div>
<div class="t" style="left:1042.30px;top:802.80px;font-size:13.6px;line-height:13.6px;font-weight:700;letter-spacing:-0.081px;color:#4b4b4b">Erhalten Sie schnell E-Sign...</div>
<div class="t" style="left:1050.40px;top:824.70px;font-size:12px;line-height:12px;letter-spacing:-0.406px;color:#4b4b4b">Senden Sie PDFs zur Signatur.</div>
<div class="t" style="left:1045.10px;top:840.00px;font-size:12px;line-height:12px;letter-spacing:-0.029px;color:#4b4b4b">Empfänger können online gratis</div>
<div class="t" style="left:1104.60px;top:854.10px;font-size:12px;line-height:12px;letter-spacing:-0.211px;color:#4b4b4b">signieren.</div>
<div class="t" style="left:1012.60px;top:876.50px;font-size:13.2px;line-height:13.2px;font-weight:700;letter-spacing:0.304px;color:#1a4fa0">Elektronische Signaturen anfordern</div>
<div class="t" style="left:94.50px;top:930.00px;font-size:13.5px;line-height:13.5px;letter-spacing:-0.343px;color:#5a5a5a">Suche</div>
<div class="t" style="left:1208.30px;top:922.70px;font-size:11.5px;line-height:11.5px;letter-spacing:-0.021px;color:#1a1a1a">15:05</div>
<div class="t" style="left:1179.80px;top:939.10px;font-size:11.5px;line-height:11.5px;letter-spacing:-0.040px;color:#1a1a1a">24.10.2023</div>
</body></html>
